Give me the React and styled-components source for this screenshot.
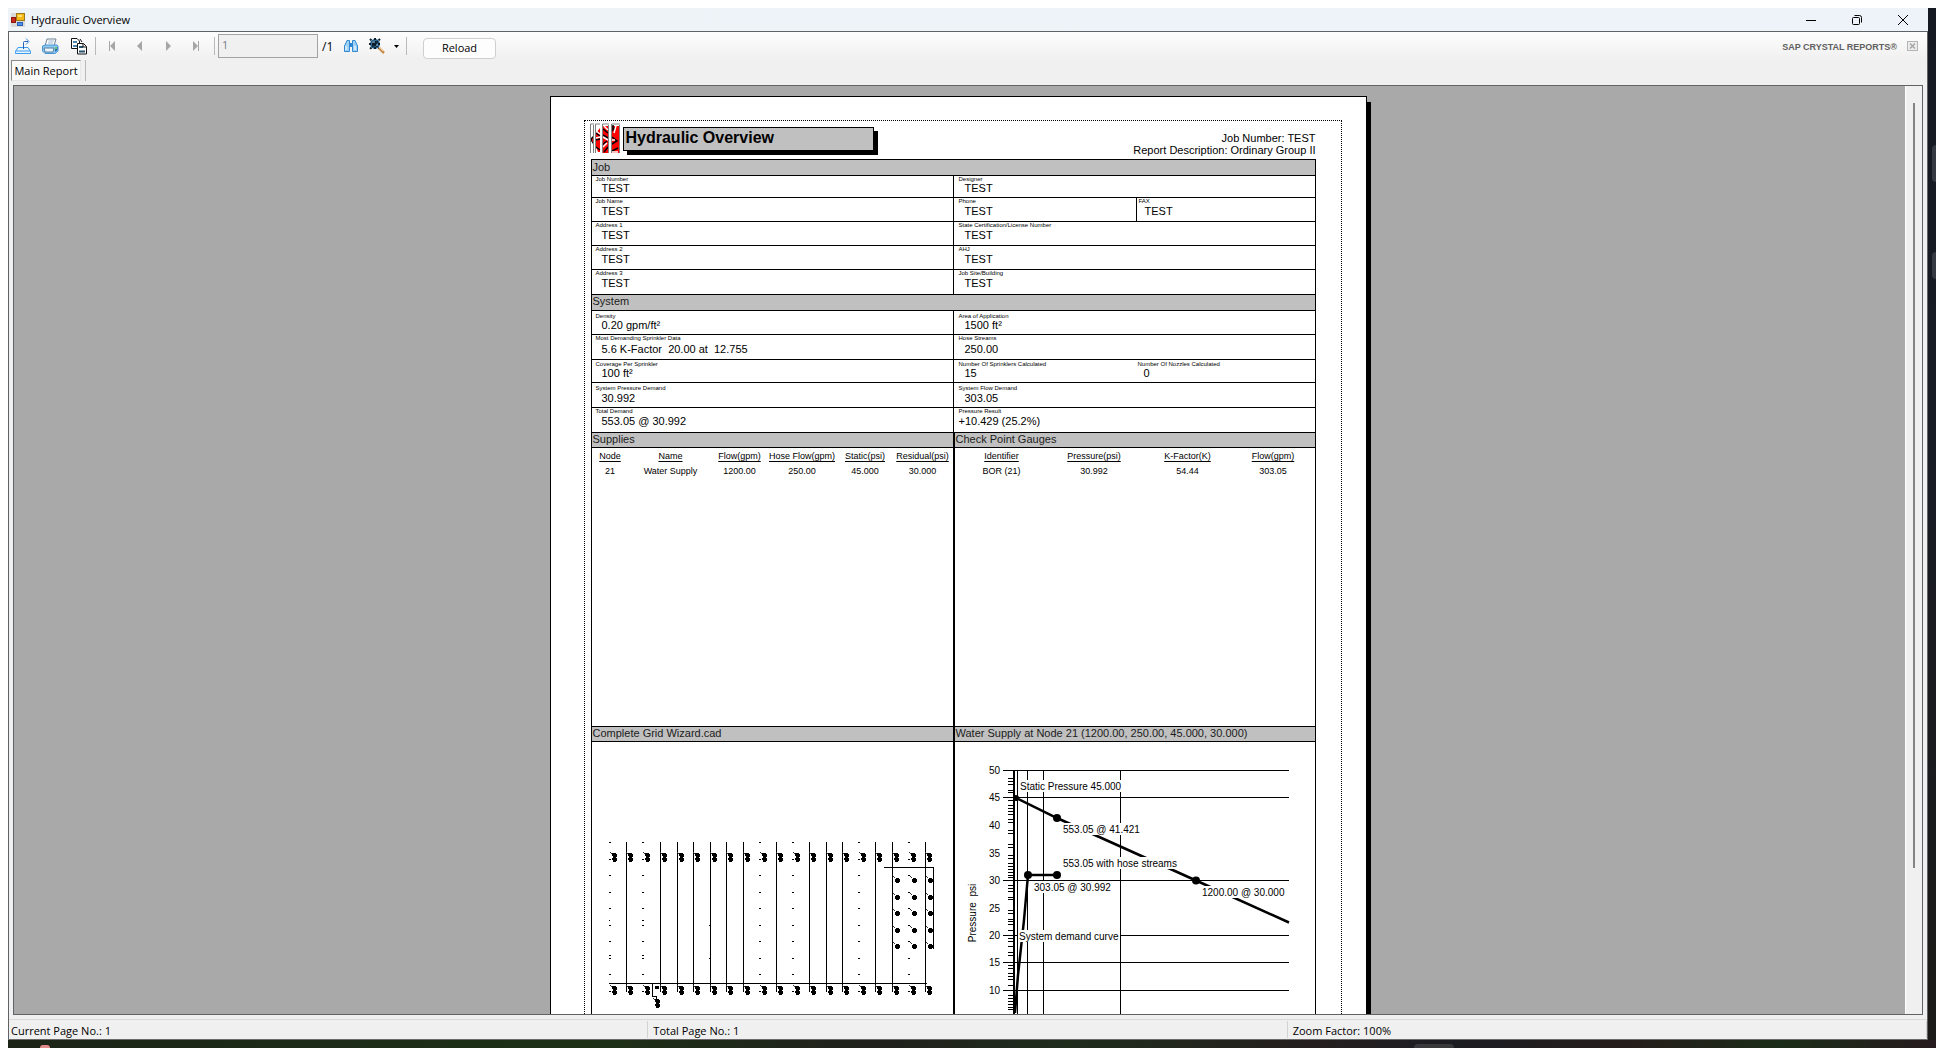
import React from "react";
import styled, { createGlobalStyle, css } from "styled-components";

const GlobalStyle = createGlobalStyle`
  * { box-sizing: border-box; }
  html, body { margin: 0; height: 100%; background: #fff; overflow: hidden; }
  button, input { font: inherit; color: inherit; margin: 0; }
`;

const uiFont = css`
  font-family: "Open Sans", "Noto Sans", sans-serif;
`;

/* ---------- desktop and window ---------- */

const Desktop = styled.div`
  ${uiFont}
  display: grid;
  grid-template-columns: minmax(0, 1fr) 8px;
  grid-template-rows: minmax(0, 1fr) 8px;
  height: 100vh;
  padding: 8px 0 0 8px;
  background: #fff;
  color: #000;
`;

const SideStrip = styled.div`
  display: flex;
  flex-direction: column;
  align-items: flex-end;
  gap: 70px;
  padding-top: 137px;
  background: linear-gradient(#141922, #171b24 40%, #1b1a18);
`;

const SideTile = styled.span`
  width: 4px;
  height: ${(p) => p.$h}px;
  border-radius: 4px 0 0 4px;
  background: #353a42;
`;

const BottomStrip = styled.div`
  grid-column: 1 / -1;
  display: flex;
  justify-content: space-between;
  align-items: flex-end;
  padding: 0 482px 0 32px;
  overflow: hidden;
  background: linear-gradient(90deg, #1c2418, #1d3016 30%, #20201c 45%, #1f2c1c 55%, #241e1e 68%, #1c1d22 75%, #251d1b 84%, #1b2c18 92%, #261a1e);
`;

const PinkDot = styled.span`
  width: 10px;
  height: 3px;
  border-radius: 5px 5px 0 0;
  background: #e58a8a;
`;

const BottomTab = styled.span`
  width: 40px;
  height: 4px;
  border-radius: 4px 4px 0 0;
  background: #39393c;
`;

const Window = styled.main`
  display: flex;
  flex-direction: column;
  min-height: 0;
  background: #f0f0f0;
  border-bottom: 1px solid #6a6a6a;
`;

const TitleBar = styled.header`
  display: flex;
  align-items: center;
  height: 23px;
  padding: 0 2px 0 3px;
  background: linear-gradient(90deg, #edf3f7, #eef3f9);
`;

const WindowTitle = styled.h1`
  flex: 1;
  margin: 0 0 0 6px;
  font-size: 11px;
  line-height: 20px;
  font-weight: 400;
`;

const CaptionButton = styled.button`
  display: grid;
  place-items: center;
  width: 46px;
  height: 20px;
  padding: 0;
  border: 0;
  background: none;
`;

const Frame = styled.div`
  flex: 1;
  display: flex;
  flex-direction: column;
  min-height: 0;
  border: 1px solid #5f6365;
  border-bottom: 0;
`;

/* ---------- toolbar ---------- */

const Toolbar = styled.div`
  display: flex;
  align-items: center;
  height: 28px;
  padding: 0 8px 0 5px;
  background: linear-gradient(#fdfdfd, #f0f0f0);
  font-size: 11px;
`;

const ToolButton = styled.button`
  display: grid;
  place-items: center;
  width: ${(p) => p.$w || 28}px;
  height: 24px;
  padding: 0;
  border: 0;
  background: none;
`;

const Separator = styled.span`
  width: 1px;
  height: ${(p) => p.$h || 18}px;
  background: #b9b9b9;
  margin: 0 ${(p) => p.$right || 0}px 0 ${(p) => p.$left || 0}px;
`;

const PageInput = styled.input`
  width: 100px;
  height: 24px;
  margin-left: 3px;
  padding: 0 3px 3px;
  border: 1px solid #a3a3a3;
  background: #f0f0f0;
  font-size: 11px;
  &:disabled { color: #7a7a84; }
`;

const PageTotal = styled.span`
  width: 19px;
  margin-left: 4px;
  font-size: 12px;
`;

const ReloadButton = styled.button`
  width: 73px;
  height: 21px;
  margin-top: 4px;
  padding: 0;
  border: 1px solid #cfcfcf;
  border-radius: 4px;
  background: #fdfdfd;
  font-size: 11px;
  line-height: 18px;
`;

const Brand = styled.span`
  margin: 2px 10px 0 auto;
  color: #606060;
  font: bold 9px "Liberation Sans", Arial, sans-serif;
`;

const TabRow = styled.div`
  display: flex;
  align-items: flex-start;
  height: 25px;
  padding: 0 2px;
`;

const ReportTab = styled.button`
  width: 70px;
  height: 21px;
  padding: 0;
  border: 1px solid;
  border-color: #8b8b8b #e8e8e8 #e8e8e8 #8b8b8b;
  background: #fafafa;
  font-size: 11px;
  line-height: 18px;
  white-space: nowrap;
`;

/* ---------- viewer ---------- */

const Viewer = styled.section`
  flex: 1;
  display: flex;
  min-height: 0;
  margin: 0 4px 4px 4px;
  border: 1px solid #606465;
`;

const Canvas = styled.div`
  flex: 1;
  min-width: 0;
  padding: 10px 3px 0 0;
  overflow: hidden;
  background: #a9a9a9;
`;

const ScrollTrack = styled.div`
  display: flex;
  justify-content: center;
  width: 17px;
  padding-top: 17px;
  border-left: 1px solid #fff;
  background: #f0f0f0;
`;

const ScrollThumb = styled.div`
  width: 2px;
  height: 84%;
  background: #858585;
`;

const Paper = styled.article`
  width: 817px;
  height: 1058px;
  margin: 0 auto;
  padding: 23px 24px 23px 33px;
  border: 1px solid #000;
  background: #fff;
  box-shadow: 4px 6px 0 #000;
  font-family: "Liberation Sans", Arial, sans-serif;
  font-size: 11px;
  line-height: 12px;
`;

const Margins = styled.div`
  height: 100%;
  padding: 2px 25px 0 6px;
  border: 1px dotted #000;
`;

const ReportHead = styled.div`
  display: flex;
  align-items: flex-start;
  height: 36px;
  margin-left: -1px;
`;

const ReportTitle = styled.h2`
  width: 251px;
  height: 24px;
  margin: 4px 0 0 3px;
  padding-left: 2px;
  border: 1px solid #000;
  background: #c0c0c0;
  box-shadow: 4px 4px 0 #000;
  font-size: 16px;
  line-height: 20px;
`;

const HeadNotes = styled.div`
  margin: 9px 0 0 auto;
  text-align: right;
`;

const Report = styled.div`
  border: 1px solid #000;
`;

const Band = styled.h3`
  height: ${(p) => p.$h || 16}px;
  margin: 0;
  padding: ${(p) => p.$top || 0}px 0 0 1px;
  border-bottom: 1px solid #000;
  background: #c0c0c0;
  font-size: 11px;
  line-height: 12px;
  font-weight: 400;
  color: #1c1c1c;
`;

const Row = styled.div`
  display: grid;
  grid-template-columns: 361px minmax(0, 1fr);
  height: ${(p) => p.$h}px;
  border-bottom: 1px solid #000;
`;

const Cell = styled.div`
  display: grid;
  grid-template-columns: ${(p) => (p.$split ? "182px minmax(0, 1fr)" : "minmax(0, 1fr)")};
  & + & { border-left: 1px solid #000; }
`;

const Field = styled.dl`
  display: flex;
  flex-direction: column;
  justify-content: space-between;
  margin: 0;
  padding: ${(p) => p.$top || 0}px 0 ${(p) => p.$bottom}px ${(p) => p.$left}px;
  ${(p) => p.$rule && "border-left: 1px solid #000;"}
`;

const Label = styled.dt`
  font-size: 6px;
  line-height: 6px;
  white-space: nowrap;
`;

const Value = styled.dd`
  margin: 0;
  padding-left: ${(p) => (p.$flush ? 0 : 6)}px;
  line-height: 12px;
  white-space: pre;
`;

const Halves = styled.div`
  display: grid;
  grid-template-columns: 361px minmax(0, 1fr);
`;

const Half = styled.section`
  & + & { border-left: 2px solid #000; }
`;

const TableArea = styled.div`
  height: 279px;
  border-bottom: 1px solid #000;
  padding-top: 1px;
`;

const DataTable = styled.table`
  table-layout: fixed;
  width: ${(p) => p.$w}px;
  border-collapse: collapse;
  font-size: 9px;
  line-height: 15px;
  text-align: center;
  th, td { padding: 0; font-weight: 400; white-space: nowrap; }
  th { text-decoration: underline; text-underline-offset: 2px; }
`;

const Drawing = styled.svg`
  display: block;
  width: 100%;
  height: 290px;
`;

/* ---------- status bar ---------- */

const StatusBar = styled.footer`
  display: grid;
  grid-template-columns: 1fr 1fr 1fr;
  align-items: center;
  height: 20px;
  border-top: 1px solid #d9d9d9;
  font-size: 11px;
  line-height: 19px;
`;

const StatusItem = styled.span`
  height: 17px;
  padding-left: ${(p) => (p.$first ? 2 : 5)}px;
  border-right: 1px solid #d2d2d2;
`;

/* ---------- icons ---------- */

const AppIcon = () => (
  <svg width="14" height="14" viewBox="0 0 14 14" aria-hidden="true">
    <rect width="14" height="14" fill="#d9d9d9" />
    <rect x="5.500" y="0.500" width="8" height="7" fill="#f5b914" stroke="#9b7a1d" />
    <rect x="7" y="2" width="4" height="2" fill="#ffe27a" />
    <rect x="0.500" y="4.500" width="4" height="5" fill="#c8281c" stroke="#8c1710" />
    <rect x="6.500" y="9.500" width="5" height="3" fill="#4d8ee8" stroke="#2b5fb3" />
  </svg>
);

const ExportIcon = () => (
  <svg width="18" height="18" viewBox="0 0 18 18" fill="none" aria-hidden="true">
    <path d="M4 10.500H14L16.500 14.500V16.500H1.500V14.500Z" stroke="#3a9bf0" fill="#e9f5ff" />
    <path d="M1.500 14H16.500" stroke="#3a9bf0" />
    <path d="M9.500 12V5.500Q9.500 4.500 10.500 4.500H14" stroke="#2563b8" />
    <path d="M12 1.500L15 4.500L12 7.500" stroke="#3a8ae0" />
  </svg>
);

const PrintIcon = () => (
  <svg width="18" height="18" viewBox="0 0 18 18" aria-hidden="true">
    <path d="M6 2H15L13 9H4Z" fill="#fff" stroke="#6e8296" />
    <path d="M7.500 4H13M7 6H12" stroke="#9db7cc" />
    <path d="M1.500 9L4 8H16L17 9V14L14 16.500H4L1.500 14Z" fill="#8ec9f2" stroke="#4594d4" />
    <path d="M3 11H13L12 15H4Z" fill="#e9f5ff" stroke="#5a7f9e" />
    <path d="M14 10V15L16.500 13V10Z" fill="#2d6fb0" />
    <rect x="14" y="10" width="2" height="2" fill="#6ac26a" />
  </svg>
);

const CopyIcon = () => (
  <svg width="18" height="18" viewBox="0 0 18 18" aria-hidden="true">
    <path d="M1.500 1.500H7L9.500 4V11.500H1.500Z" fill="#fff" stroke="#111" />
    <path d="M3 5H7M3 9H8" stroke="#4f86a8" strokeWidth="2" />
    <path d="M7.500 6.500H13.500L16.500 9.500V17H7.500Z" fill="#fff" stroke="#111" />
    <path d="M9 10H13M9 14.500H15" stroke="#23516e" strokeWidth="2" />
    <path d="M13 6.500V10H16.500M10 2L12 5" stroke="#111" fill="none" />
  </svg>
);

const NavIcon = ({ dir, bar }) => (
  <svg width="8" height="10" viewBox="0 0 8 10" fill="#a6a6a6" aria-hidden="true">
    <g transform={dir === "back" ? undefined : "matrix(-1 0 0 1 8 0)"}>
      <path d={bar ? "M7 0V10L2 5Z" : "M6 0V10L1 5Z"} />
      {bar && <rect x="1" width="1" height="10" />}
    </g>
  </svg>
);

const FindIcon = () => (
  <svg width="16" height="14" viewBox="0 0 16 14" aria-hidden="true">
    <path d="M1.500 12.500V7L4 1.500H6.500V12.500ZM14.500 12.500V7L12 1.500H9.500V12.500Z" fill="#9fd2f7" stroke="#3087d0" />
    <path d="M6 4H10V8H6Z" fill="#3087d0" />
    <path d="M3 11V7M12 11V7" stroke="#fff" />
  </svg>
);

const ZoomIcon = () => (
  <svg width="16" height="16" viewBox="0 0 16 16" aria-hidden="true">
    <circle cx="6" cy="6" r="5" fill="#2b6a98" />
    <path d="M6 0V12M0 6H12M1 1L11 11M11 1L1 11" stroke="#0b1c2b" strokeWidth="2" strokeDasharray="2 1" />
    <path d="M3 4H6M7 7H9" stroke="#9cd1f2" />
    <path d="M10 10L15 15" stroke="#c98c4a" strokeWidth="2.500" />
    <path d="M10 9L14 13" stroke="#f1cf9e" />
  </svg>
);

const CloseViewIcon = () => (
  <svg width="12" height="11" viewBox="0 0 12 11" fill="none" aria-hidden="true">
    <rect x="0.500" y="0.500" width="10" height="9" fill="#ededed" stroke="#b5b5b5" />
    <path d="M3 2.500L8 7.500M8 2.500L3 7.500" stroke="#a5a5a5" strokeWidth="1.500" />
  </svg>
);

const SprinklerLogo = () => (
  <svg width="30" height="30" viewBox="0 0 30 30" aria-hidden="true">
    <path d="M1 15L3 13V21L1 18Z" />
    <path d="M2 16L4 14V21L2 18Z" fill="red" />
    <path d="M10 5L6 10V24L8 29H10Z" fill="red" />
    <rect x="13" y="3" width="5" height="27" fill="red" />
    <rect x="22" y="3" width="7" height="27" fill="red" />
    <path d="M6 10L10 13M6 17L10 16M6 24L10 27M13 6L18 10M13 12L18 15M12 22L17 18M14 29L18 24M23 2V7L26 4M22 14L27 18L22 21M22 28L28 25" stroke="#000" strokeWidth="1.500" fill="none" />
    <path d="M6 8L10 11M6 15L10 14M14 3L18 7M13 14L18 17M13 24L17 20M26 3L24 10M21 17H25M22 29H28" stroke="#fff" strokeWidth="1.500" fill="none" />
    <path d="M0.500 30V1H4M3.500 2V30M5.500 30V1H10M12.500 30V1H19M18.500 2V30M21.500 30V1H30M29.500 2V30" stroke="#808080" fill="none" />
    <path d="M11 30V0M20 30V0" stroke="#fff" />
  </svg>
);

/* ---------- grid plan ---------- */

const columns = [30, 46, 63, 80, 97, 113, 130, 146, 163, 180, 196, 213, 229, 246, 262, 279, 295, 312, 329, 345];
const dashed = [0, 2, 9, 11, 15, 18];
const dashLevels = [0, 17, 33, 50, 66, 83, 99, 116, 132, 149];

const Head = ({ x, y }) => (
  <g>
    <path d={`M${x - 4} ${y - 5}L${x} ${y - 2}`} stroke="#333" strokeDasharray="1 1" />
    <path d={`M${x - 2} ${y - 4}h4v1h1v3h-1v1h1v3h-1v1h-3v-2h-1v-2h1v-2h-1z`} />
  </g>
);

const GridPlan = () => (
  <Drawing viewBox="592 742 361 290" preserveAspectRatio="xMinYMin meet" role="img" aria-label="Complete grid plan">
    <g transform="translate(580 0)" shapeRendering="crispEdges">
      {columns.map((x, i) =>
        dashed.includes(i) ? (
          <g key={x}>
            {dashLevels.map((d) => (
              <rect key={d} x={x - 1} y={842 + d} width="2" height="1" />
            ))}
          </g>
        ) : (
          <rect key={x} x={x} y="842" width="1" height="150" />
        )
      )}
      <path d="M29 920h1M29 955h2M62 920h2M62 955h2M129 925h1M129 958h1" stroke="#000" />
      {columns.map((x) => (
        <g key={x}>
          <Head x={x + 4} y={857} />
          <Head x={x + 4} y={990} />
        </g>
      ))}
      <rect x="29" y="983" width="318" height="1" />
      <path d="M304 867.500H353.500V949M72.500 983V996.500H76V999" stroke="#000" fill="none" />
      <rect x="75" y="986" width="4" height="3" />
      <Head x={77} y={1003} />
      {[880, 897, 913, 930, 946].map((y) =>
        [317, 334, 350].map((x) => (
          <g key={`${x}-${y}`}>
            <path d={`M${x - 4} ${y - 4}L${x} ${y}`} stroke="#333" strokeDasharray="1 1" />
            <path d={`M${x - 1} ${y - 2}h3v1h1v3h-1v1h-3v-1h-1v-3h1z`} />
          </g>
        ))
      )}
    </g>
  </Drawing>
);

/* ---------- supply graph ---------- */

const minorTicks = [778, 781, 784, 790, 792, 800, 805, 808, 811, 814, 819, 822, 830, 833, 844, 847, 855, 858, 863, 866, 869, 872, 875, 877, 885, 888, 891, 897, 899, 910, 913, 919, 921, 924, 930, 938, 941, 946, 952, 955, 965, 968, 973, 976, 979, 985, 995, 998, 1001, 1004, 1007, 1009];
const axisLabels = [
  [50, 770], [45, 797], [40, 825], [35, 853], [30, 880], [25, 908], [20, 935], [15, 962], [10, 990],
];
const ruled = [770, 797, 880, 935, 962, 990, 1018];
const notes = [
  { x: 1019, y: 790, w: 106, text: "Static Pressure 45.000" },
  { x: 1062, y: 833, w: 81, text: "553.05 @ 41.421" },
  { x: 1062, y: 867, w: 119, text: "553.05 with hose streams" },
  { x: 1033, y: 891, w: 81, text: "303.05 @ 30.992" },
  { x: 1201, y: 896, w: 86, text: "1200.00 @ 30.000" },
  { x: 1018, y: 940, w: 102, text: "System demand curve" },
];

const SupplyGraph = () => (
  <Drawing viewBox="955 742 360 290" preserveAspectRatio="xMinYMin meet" fontSize="10" role="img" aria-label="Water supply graph">
    <g shapeRendering="crispEdges">
      {ruled.map((y) => (
        <rect key={y} x="1003" y={y} width="286" height="1" />
      ))}
      {minorTicks.map((y) => (
        <rect key={y} x="1008" y={y} width="6" height="1" />
      ))}
      <rect x="1013" y="770" width="2" height="262" />
      {[1017, 1027, 1043, 1120].map((x) => (
        <rect key={x} x={x} y="770" width="1" height="262" />
      ))}
    </g>
    <g fill="none" stroke="#000" strokeWidth="2.500">
      <path d="M1014 797L1057 818L1196 880.500L1289 922.500" />
      <path d="M1057 875H1028L1024 920L1018 975L1015 1013" />
    </g>
    <circle cx="1016" cy="798" r="3" />
    <circle cx="1057" cy="818" r="4" />
    <circle cx="1196" cy="880.500" r="4" />
    <circle cx="1028" cy="875" r="4" />
    <circle cx="1057" cy="875" r="4" />
    {notes.map((n) => (
      <g key={n.text}>
        <rect x={n.x} y={n.y - 10} width={n.w} height="12" fill="#fff" />
        <text x={n.x + 1} y={n.y}>{n.text}</text>
      </g>
    ))}
    {axisLabels.map(([v, y]) => (
      <text key={v} x="1000" y={y + 4} textAnchor="end">{v}</text>
    ))}
    <text x="976" y="913" textAnchor="middle" transform="rotate(-90 976 913)" style={{ whiteSpace: "pre" }}>{"Pressure  psi"}</text>
  </Drawing>
);

/* ---------- data ---------- */

const jobRows = [
  { h: 22, bottom: 5, cells: [[["Job Number", "TEST"]], [["Designer", "TEST"]]] },
  { h: 24, bottom: 4, cells: [[["Job Name", "TEST"]], [["Phone", "TEST"], ["FAX", "TEST"]]], rule: true },
  { h: 24, bottom: 4, cells: [[["Address 1", "TEST"]], [["State Certification/License Number", "TEST"]]] },
  { h: 24, bottom: 4, cells: [[["Address 2", "TEST"]], [["AHJ", "TEST"]]] },
  { h: 25, bottom: 5, cells: [[["Address 3", "TEST"]], [["Job Site/Building", "TEST"]]] },
];

const systemRows = [
  { h: 24, top: 2, bottom: 3, cells: [[["Density", "0.20 gpm/ft²"]], [["Area of Application", "1500 ft²"]]] },
  { h: 25, bottom: 4, cells: [[["Most Demanding Sprinkler Data", "5.6 K-Factor  20.00 at  12.755"]], [["Hose Streams", "250.00"]]] },
  { h: 23, top: 1, bottom: 3, cells: [[["Coverage Per Sprinkler", "100 ft²"]], [["Number Of Sprinklers Calculated", "15"], ["Number Of Nozzles Calculated", "0"]]] },
  { h: 25, top: 2, bottom: 3, cells: [[["System Pressure Demand", "30.992"]], [["System Flow Demand", "303.05"]]] },
  { h: 25, bottom: 5, cells: [[["Total Demand", "553.05 @ 30.992"]], [["Pressure Result", "+10.429 (25.2%)", true]]] },
];

const supplies = {
  width: 361,
  cols: [37, 84, 54, 71, 55, 60],
  head: ["Node", "Name", "Flow(gpm)", "Hose Flow(gpm)", "Static(psi)", "Residual(psi)"],
  row: ["21", "Water Supply", "1200.00", "250.00", "45.000", "30.000"],
};

const gauges = {
  width: 356,
  cols: [94, 91, 96, 75],
  head: ["Identifier", "Pressure(psi)", "K-Factor(K)", "Flow(gpm)"],
  row: ["BOR (21)", "30.992", "54.44", "303.05"],
};

const FieldRow = ({ row }) => (
  <Row $h={row.h}>
    {row.cells.map((fields, i) => (
      <Cell key={i} $split={fields.length > 1}>
        {fields.map(([label, value, flush], j) => (
          <Field
            key={label}
            $top={row.top}
            $bottom={row.bottom}
            $left={j > 0 ? 2 : 4 + i}
            $rule={row.rule && j > 0}
          >
            <Label>{label}</Label>
            <Value $flush={flush}>{value}</Value>
          </Field>
        ))}
      </Cell>
    ))}
  </Row>
);

const ReportTable = ({ data }) => (
  <DataTable $w={data.width}>
    <colgroup>
      {data.cols.map((w, i) => (
        <col key={i} width={w} />
      ))}
    </colgroup>
    <thead>
      <tr>{data.head.map((h) => <th key={h} scope="col">{h}</th>)}</tr>
    </thead>
    <tbody>
      <tr>{data.row.map((c, i) => <td key={i}>{c}</td>)}</tr>
    </tbody>
  </DataTable>
);

export default function App() {
  return (
    <Desktop>
      <GlobalStyle />
      <Window>
        <TitleBar>
          <AppIcon />
          <WindowTitle>Hydraulic Overview</WindowTitle>
          <CaptionButton aria-label="Minimize">
            <svg width="12" height="12" viewBox="0 0 12 12"><path d="M1 6.500H11" stroke="#000" /></svg>
          </CaptionButton>
          <CaptionButton aria-label="Restore">
            <svg width="12" height="12" viewBox="0 0 12 12" fill="none" stroke="#000">
              <rect x="1.500" y="3.500" width="7" height="7" rx="1" />
              <path d="M3.500 1.500H8.500Q10.500 1.500 10.500 3.500V8.500" />
            </svg>
          </CaptionButton>
          <CaptionButton aria-label="Close">
            <svg width="12" height="12" viewBox="0 0 12 12"><path d="M1 1L11 11M11 1L1 11" stroke="#000" /></svg>
          </CaptionButton>
        </TitleBar>
        <Frame>
          <Toolbar>
            <ToolButton aria-label="Export" $w={16}><ExportIcon /></ToolButton>
            <ToolButton aria-label="Print" $w={40}><PrintIcon /></ToolButton>
            <ToolButton aria-label="Copy" $w={16}><CopyIcon /></ToolButton>
            <Separator $left={9} $right={2} />
            <ToolButton aria-label="First page"><NavIcon dir="back" bar /></ToolButton>
            <ToolButton aria-label="Previous page"><NavIcon dir="back" /></ToolButton>
            <ToolButton aria-label="Next page"><NavIcon /></ToolButton>
            <ToolButton aria-label="Last page"><NavIcon bar /></ToolButton>
            <Separator $left={4} />
            <PageInput aria-label="Page number" defaultValue="1" disabled />
            <PageTotal>/1</PageTotal>
            <ToolButton aria-label="Find text" $w={20}><FindIcon /></ToolButton>
            <ToolButton aria-label="Zoom" $w={32}><ZoomIcon /></ToolButton>
            <ToolButton aria-label="Zoom options" $w={6}>
              <svg width="5" height="3" viewBox="0 0 5 3"><path d="M0 0H5L2.500 3Z" /></svg>
            </ToolButton>
            <Separator $left={7} $right={16} />
            <ReloadButton>Reload</ReloadButton>
            <Brand>SAP CRYSTAL REPORTS®</Brand>
            <ToolButton aria-label="Close view" $w={12}><CloseViewIcon /></ToolButton>
          </Toolbar>
          <TabRow>
            <ReportTab>Main Report</ReportTab>
            <Separator $left={4} $h={21} />
          </TabRow>
          <Viewer>
            <Canvas>
              <Paper>
                <Margins>
                  <ReportHead>
                    <SprinklerLogo />
                    <ReportTitle>Hydraulic Overview</ReportTitle>
                    <HeadNotes>
                      <div>Job Number: TEST</div>
                      <div>Report Description: Ordinary Group II</div>
                    </HeadNotes>
                  </ReportHead>
                  <Report>
                    <Band $top={1}>Job</Band>
                    {jobRows.map((r) => <FieldRow key={r.cells[0][0][0]} row={r} />)}
                    <Band>System</Band>
                    {systemRows.map((r) => <FieldRow key={r.cells[0][0][0]} row={r} />)}
                    <Halves>
                      <Half>
                        <Band $h={15}>Supplies</Band>
                        <TableArea><ReportTable data={supplies} /></TableArea>
                        <Band $h={15}>Complete Grid Wizard.cad</Band>
                        <GridPlan />
                      </Half>
                      <Half>
                        <Band $h={15}>Check Point Gauges</Band>
                        <TableArea><ReportTable data={gauges} /></TableArea>
                        <Band $h={15}>Water Supply at Node 21 (1200.00, 250.00, 45.000, 30.000)</Band>
                        <SupplyGraph />
                      </Half>
                    </Halves>
                  </Report>
                </Margins>
              </Paper>
            </Canvas>
            <ScrollTrack><ScrollThumb /></ScrollTrack>
          </Viewer>
          <StatusBar>
            <StatusItem $first>Current Page No.: 1</StatusItem>
            <StatusItem>Total Page No.: 1</StatusItem>
            <StatusItem>Zoom Factor: 100%</StatusItem>
          </StatusBar>
        </Frame>
      </Window>
      <SideStrip>
        <SideTile $h={37} />
        <SideTile $h={27} />
      </SideStrip>
      <BottomStrip>
        <PinkDot />
        <BottomTab />
      </BottomStrip>
    </Desktop>
  );
}
